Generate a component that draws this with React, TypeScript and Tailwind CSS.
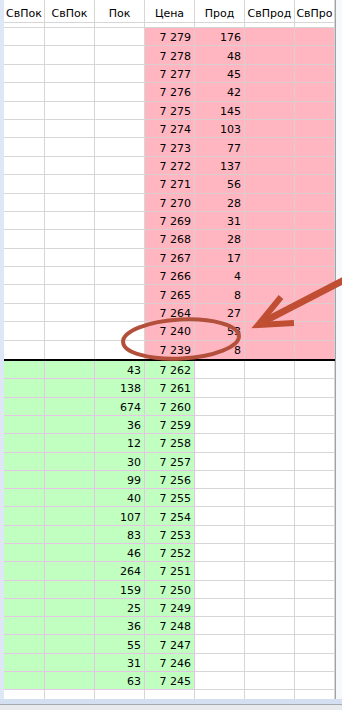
const headers = ["СвПок", "СвПок", "Пок", "Цена", "Прод", "СвПрод", "СвПро"];

const sells: [number, number][] = [
  [7279, 176],
  [7278, 48],
  [7277, 45],
  [7276, 42],
  [7275, 145],
  [7274, 103],
  [7273, 77],
  [7272, 137],
  [7271, 56],
  [7270, 28],
  [7269, 31],
  [7268, 28],
  [7267, 17],
  [7266, 4],
  [7265, 8],
  [7264, 27],
  [7240, 53],
  [7239, 8],
];

const buys: [number, number][] = [
  [43, 7262],
  [138, 7261],
  [674, 7260],
  [36, 7259],
  [12, 7258],
  [30, 7257],
  [99, 7256],
  [40, 7255],
  [107, 7254],
  [83, 7253],
  [46, 7252],
  [264, 7251],
  [159, 7250],
  [25, 7249],
  [36, 7248],
  [55, 7247],
  [31, 7246],
  [63, 7245],
];

const fmt = (n: number) => (n >= 1000 ? `${Math.floor(n / 1000)} ${String(n % 1000).padStart(3, "0")}` : String(n));

const WHITE = "bg-white border-[#d6d6d6]";
const PINK = "bg-[#ffb6c1] border-[#dccdd0]";
const GREEN = "bg-[#c1ffc1] border-[#e2c6e4]";

function Cell({ tone, text, bottom = true }: { tone: string; text?: string; bottom?: boolean }) {
  return (
    <div
      className={`flex items-center justify-end pr-[3px] pt-[2px] border-r ${bottom ? "border-b" : ""} ${tone}`}
    >
      {text}
    </div>
  );
}

export default function App() {
  return (
    <div className="w-[342px] h-[710px] bg-[#e9eaec] relative overflow-hidden text-[11px] leading-[13px] text-black font-['DejaVu_Sans',sans-serif]">
      <div className="flex h-[699px]">
        <div className="w-[4px] bg-[#dde7f5]" />
        <div className="w-[331px] bg-white flex flex-col">
          {/* header */}
          <div className="grid grid-cols-[41px_50px_50px_50px_50px_50px_40px] h-[23px]">
            {headers.map((h, i) => (
              <div
                key={i}
                className="flex justify-center pt-[7px] border-r border-b border-[#d6d6d6] overflow-hidden whitespace-nowrap"
              >
                {h}
              </div>
            ))}
          </div>
          <div className="grid grid-cols-[41px_50px_50px_50px_50px_50px_40px] h-[5px]">
            {headers.map((_, i) => (
              <div key={i} className="border-r border-b border-[#d6d6d6]" />
            ))}
          </div>

          {/* sell side */}
          {sells.map(([price, qty], r) => {
            const last = r === sells.length - 1;
            return (
              <div key={price} className="grid grid-cols-[41px_50px_50px_50px_50px_50px_40px] h-[18.4px]">
                <Cell tone={WHITE} bottom={!last} />
                <Cell tone={WHITE} bottom={!last} />
                <Cell tone={WHITE} bottom={!last} />
                <Cell tone={PINK} text={fmt(price)} bottom={!last} />
                <Cell tone={PINK} text={fmt(qty)} bottom={!last} />
                <Cell tone={PINK} bottom={!last} />
                <Cell tone={PINK} bottom={!last} />
              </div>
            );
          })}

          <div className="h-[2px] bg-black" />

          {/* buy side */}
          {buys.map(([qty, price]) => (
            <div key={price} className="grid grid-cols-[41px_50px_50px_50px_50px_50px_40px] h-[18.3px]">
              <Cell tone={GREEN} />
              <Cell tone={GREEN} />
              <Cell tone={GREEN} text={fmt(qty)} />
              <Cell tone={GREEN} text={fmt(price)} />
              <Cell tone={WHITE} />
              <Cell tone={WHITE} />
              <Cell tone={WHITE} />
            </div>
          ))}

          <div className="grid grid-cols-[41px_50px_50px_50px_50px_50px_40px] flex-1">
            {headers.map((_, i) => (
              <div key={i} className="border-r border-[#d6d6d6]" />
            ))}
          </div>
        </div>
        <div className="w-[1px] bg-[#9ea3aa]" />
        <div className="flex-1 bg-[#f6f8fb]" />
      </div>
      <div className="h-[5px] bg-[#d4e0f1]" />
      <div className="h-[1px] bg-[#a4a9b0]" />

      {/* annotation overlay */}
      <svg className="absolute inset-0 pointer-events-none" width="342" height="710" viewBox="0 0 342 710">
        <ellipse
          cx="181"
          cy="339"
          rx="58"
          ry="19.5"
          transform="rotate(-3 181 339)"
          fill="none"
          stroke="#b2503b"
          strokeWidth="4"
        />
        <line x1="346" y1="279" x2="263" y2="322" stroke="#bf4e33" strokeWidth="7" />
        <polyline
          points="281,297 258,325 294,323"
          fill="none"
          stroke="#bf4e33"
          strokeWidth="6"
          strokeLinejoin="miter"
          strokeMiterlimit="10"
        />
      </svg>
    </div>
  );
}
